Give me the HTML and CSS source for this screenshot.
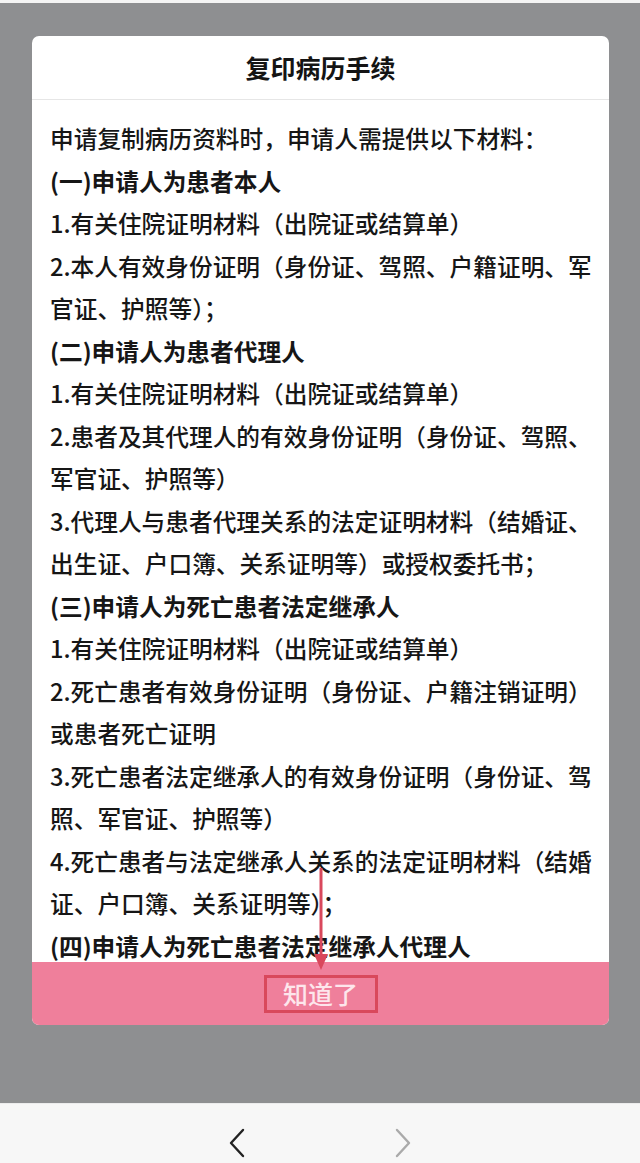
FILE: index.html
```html
<!DOCTYPE html>
<html lang="zh-CN">
<head>
<meta charset="utf-8">
<title>复印病历手续</title>
<link rel="stylesheet" href="styles.css">
</head>
<body>
<div class="screen">
  <div class="top-strip"></div>
  <div class="mask">
    <div class="dialog">
      <div class="dialog-title">复印病历手续</div>
      <div class="dialog-body">
        <p>申请复制病历资料时，申请人需提供以下材料：</p>
        <p class="head">(一)申请人为患者本人</p>
        <p>1.有关住院证明材料（出院证或结算单）</p>
        <p>2.本人有效身份证明（身份证、驾照、户籍证明、军官证、护照等）；</p>
        <p class="head">(二)申请人为患者代理人</p>
        <p>1.有关住院证明材料（出院证或结算单）</p>
        <p>2.患者及其代理人的有效身份证明（身份证、驾照、军官证、护照等）</p>
        <p>3.代理人与患者代理关系的法定证明材料（结婚证、出生证、户口簿、关系证明等）或授权委托书；</p>
        <p class="head">(三)申请人为死亡患者法定继承人</p>
        <p>1.有关住院证明材料（出院证或结算单）</p>
        <p>2.死亡患者有效身份证明（身份证、户籍注销证明）或患者死亡证明</p>
        <p>3.死亡患者法定继承人的有效身份证明（身份证、驾照、军官证、护照等）</p>
        <p>4.死亡患者与法定继承人关系的法定证明材料（结婚证、户口簿、关系证明等）；</p>
        <p class="head">(四)申请人为死亡患者法定继承人代理人</p>
      </div>
      <div class="dialog-footer">
        <span class="ok-btn">知道了</span>
      </div>
      <svg class="arrow" width="20" height="104" viewBox="0 0 20 104">
        <line x1="10" y1="0" x2="10" y2="90" stroke="#d9485c" stroke-width="3"/>
        <path d="M3 86 L10 102 L17 86 Z" fill="#d9485c"/>
      </svg>
    </div>
  </div>
  <div class="navbar">
    <svg class="nav-icon" width="18" height="30" viewBox="0 0 18 30">
      <path d="M15 2 L3 15 L15 28" fill="none" stroke="#222" stroke-width="2.4" stroke-linecap="round" stroke-linejoin="round"/>
    </svg>
    <svg class="nav-icon" width="18" height="30" viewBox="0 0 18 30">
      <path d="M3 2 L15 15 L3 28" fill="none" stroke="#aaaaaa" stroke-width="2.4" stroke-linecap="round" stroke-linejoin="round"/>
    </svg>
  </div>
</div>
</body>
</html>
```

FILE: styles.css
```css
* {
  box-sizing: border-box;
}

html, body {
  margin: 0;
  padding: 0;
}

body {
  font-family: "Noto Sans CJK SC", "Noto Sans", sans-serif;
  color: #161616;
}

.screen {
  width: 640px;
  height: 1163px;
  display: flex;
  flex-direction: column;
  overflow: hidden;
}

.top-strip {
  height: 3px;
  background: #f4f4f4;
}

.mask {
  flex: 1;
  background: #8e8f91;
  padding-top: 33px;
}

.dialog {
  position: relative;
  width: 577px;
  margin-left: 32px;
  background: #ffffff;
  border-radius: 7px;
  overflow: hidden;
  display: flex;
  flex-direction: column;
}

.dialog-title {
  height: 64px;
  display: flex;
  align-items: center;
  justify-content: center;
  font-size: 25px;
  font-weight: 700;
  color: #141414;
  border-bottom: 1px solid #e6e6e6;
  padding-bottom: 1px;
}

.dialog-body {
  height: 862px;
  overflow: hidden;
  padding: 17px 16px 0 18px;
}

.dialog-body p {
  margin: 0;
  font-size: 23.7px;
  line-height: 42.5px;
  font-weight: 500;
}

.dialog-body p.head {
  font-weight: 700;
}

.dialog-footer {
  height: 63px;
  background: #ef7f9b;
  display: flex;
  align-items: center;
  justify-content: center;
}

.ok-btn {
  display: inline-block;
  width: 114px;
  height: 38px;
  border: 3px solid #d9485c;
  color: #fde6ec;
  font-size: 25px;
  font-weight: 500;
  line-height: 31px;
  text-align: center;
  margin-top: 1px;
}

.arrow {
  position: absolute;
  left: 279px;
  top: 832px;
}

.navbar {
  height: 60px;
  background: #f7f7f7;
  border-top: 1px solid #ececec;
  display: flex;
  align-items: center;
  justify-content: center;
  gap: 148px;
  padding-top: 19px;
}

.nav-icon {
  display: block;
}
```
